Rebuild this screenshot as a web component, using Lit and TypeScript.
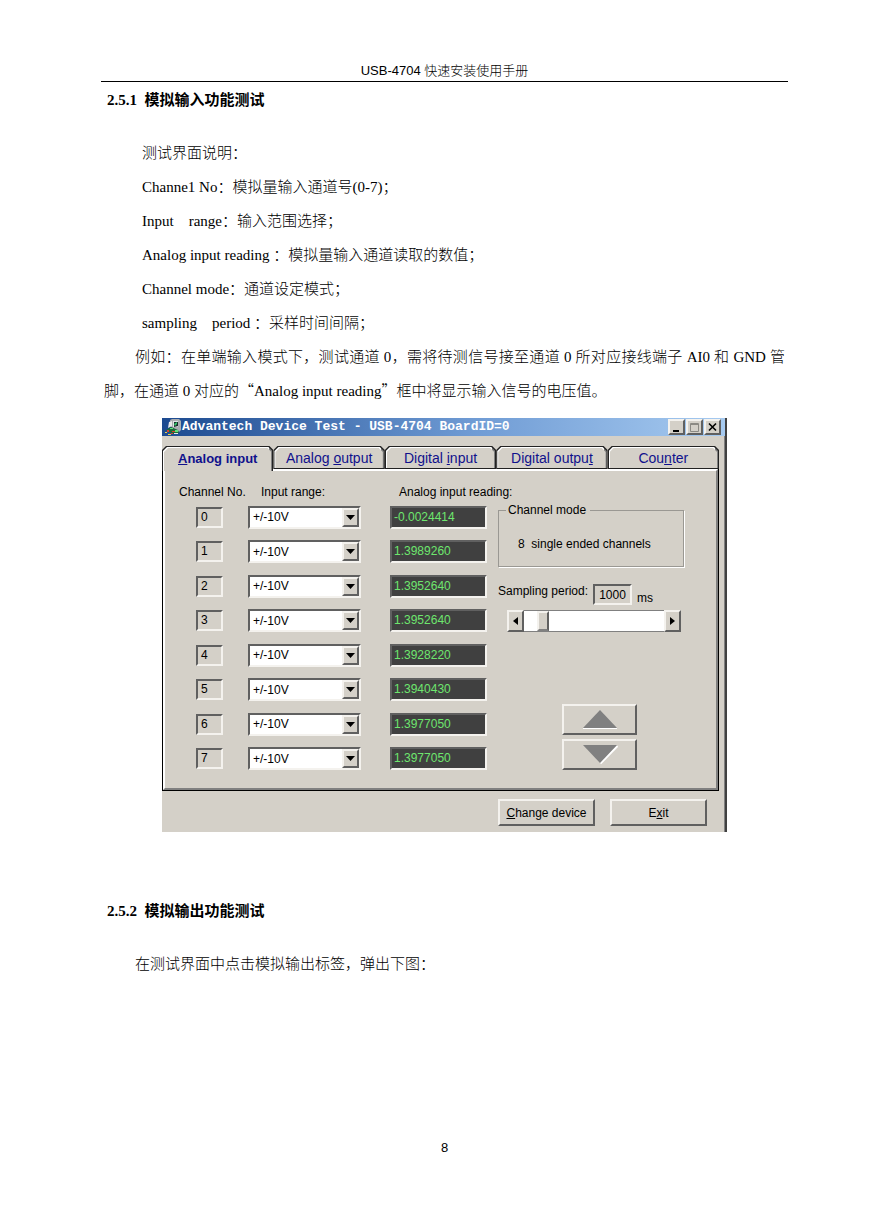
import { LitElement, html, css, svg } from "lit";
import { customElement, state } from "lit/decorators.js";
import { classMap } from "lit/directives/class-map.js";

interface Tab {
  before: string;
  key: string;
  after: string;
}

@customElement("device-test-window")
class DeviceTestWindow extends LitElement {
  static styles = css`
    :host {
      display: block;
      box-sizing: border-box;
      background: #d4d0c8;
      border-right: 2px solid #404040;
      box-shadow: inset -1px 0 #808080;
      color: #000;
      font: 12px/14px "Liberation Sans", sans-serif;
    }
    * {
      box-sizing: border-box;
    }
    button,
    input,
    select {
      margin: 0;
      padding: 0;
      border-radius: 0;
      font: inherit;
      color: inherit;
    }
    .raised {
      background: #d4d0c8;
      border: 2px solid;
      border-color: #f4f2ee #606060 #606060 #f4f2ee;
    }
    .sunken {
      border: 2px solid;
      border-color: #606060 #f4f2ee #f4f2ee #606060;
    }
    .titlebar {
      display: flex;
      align-items: center;
      height: 18px;
      padding: 0 4px 0 2px;
      background: linear-gradient(90deg, #1c4a90 0%, #6f9bd4 55%, #a6caf0 100%);
    }
    .app-icon {
      width: 18px;
      height: 18px;
      flex: none;
    }
    .title {
      flex: 1;
      margin: 0;
      font: bold 13px/18px "Liberation Mono", monospace;
      color: #fff;
      white-space: nowrap;
    }
    .winbtn {
      display: grid;
      place-items: center;
      width: 17px;
      height: 16px;
    }
    .winbtn + .winbtn {
      margin-left: 1px;
    }
    .winbtn svg {
      display: block;
    }
    .tabs {
      display: flex;
      margin: 10px 6px 0 0;
    }
    .tab {
      position: relative;
      flex: 1;
      height: 23px;
      border: 0;
      background: #222;
      color: #10108c;
      font-size: 14px;
      line-height: 22px;
      clip-path: polygon(0 4px, 4px 0, calc(100% - 4px) 0, 100% 4px, 100% 100%, 0 100%);
    }
    .tab::before,
    .tab::after {
      content: "";
      position: absolute;
      clip-path: polygon(0 4px, 4px 0, calc(100% - 4px) 0, 100% 4px, 100% 100%, 0 100%);
    }
    .tab::before {
      inset: 1px;
      background: linear-gradient(90deg, #fff 97%, #808080 97%);
    }
    .tab::after {
      inset: 2px 2px 1px 2px;
      background: #d4d0c8;
    }
    .tab span {
      position: relative;
      z-index: 1;
    }
    .tab.active {
      z-index: 1;
      height: 25px;
      margin-bottom: -2px;
      font-size: 13px;
      font-weight: bold;
      line-height: 25px;
    }
    .tab.active::before,
    .tab.active::after {
      bottom: 0;
    }
    .frame {
      margin-right: 6px;
      border: solid #000;
      border-width: 0 1px 1px 1px;
    }
    .panel {
      display: flex;
      gap: 11px;
      padding: 12px 32px 12px 14px;
      border: 2px solid;
      border-color: #fff #808080 #808080 #fff;
    }
    table {
      flex: none;
      width: 308px;
      height: 293px;
      border-collapse: collapse;
      table-layout: fixed;
    }
    th,
    td {
      padding: 0;
      font-weight: normal;
      text-align: left;
      white-space: nowrap;
    }
    thead th {
      height: 17px;
    }
    .c-no {
      width: 69px;
    }
    .c-range {
      width: 142px;
    }
    .h-range {
      padding-left: 13px;
    }
    .h-read {
      padding-left: 9px;
    }
    .no {
      display: block;
      width: 27px;
      height: 21px;
      margin-left: 17px;
      padding-left: 3px;
      line-height: 17px;
    }
    .pick {
      display: block;
      position: relative;
      width: 113px;
      height: 23px;
      background: #fff;
    }
    select {
      display: block;
      width: 100%;
      height: 19px;
      padding-left: 3px;
      border: 0;
      background: none;
      appearance: none;
      outline: none;
    }
    .drop {
      position: absolute;
      top: 0;
      right: 0;
      display: grid;
      place-items: center;
      width: 17px;
      height: 19px;
      pointer-events: none;
    }
    .reading {
      display: block;
      width: 97px;
      height: 23px;
      padding-left: 2px;
      background: #404040;
      color: #6ee66e;
      line-height: 19px;
    }
    .side {
      flex: 1;
      min-width: 0;
      padding-top: 20px;
    }
    fieldset {
      height: 64px;
      margin: 0;
      padding: 20px 0 0 19px;
      border: 1px solid #9a9893;
      box-shadow: 1px 1px #fff;
    }
    legend {
      margin-left: -12px;
      padding: 0 4px 0 2px;
      background: #d4d0c8;
    }
    .mode {
      margin: 0;
      white-space: pre;
    }
    .period {
      display: flex;
      align-items: flex-start;
      gap: 5px;
      margin-top: 17px;
    }
    .period label {
      width: 90px;
      white-space: nowrap;
    }
    .period input {
      width: 39px;
      height: 21px;
      background: none;
      text-align: center;
    }
    .unit {
      align-self: flex-end;
    }
    .scroll {
      display: flex;
      width: 174px;
      height: 22px;
      margin: 5px 0 0 9px;
    }
    .step {
      display: grid;
      place-items: center;
      flex: none;
      width: 17px;
      height: 22px;
    }
    .scroll input {
      flex: 1;
      min-width: 0;
      height: 22px;
      background: #fff;
      border: solid #808080;
      border-width: 1px 0;
      appearance: none;
      outline: none;
    }
    .scroll input::-webkit-slider-thumb {
      appearance: none;
      box-sizing: border-box;
      width: 12px;
      height: 20px;
      background: #d4d0c8;
      border: 2px solid;
      border-color: #f4f2ee #606060 #808080 #f4f2ee;
    }
    .arrows {
      display: grid;
      gap: 4px;
      width: 75px;
      margin: 72px 0 0 64px;
    }
    .arrow {
      display: grid;
      place-items: center;
      height: 31px;
    }
    .footer {
      display: flex;
      justify-content: flex-end;
      gap: 15px;
      padding: 8px 18px 6px 0;
    }
    .footer button {
      width: 97px;
      height: 27px;
    }
  `;

  @state() private active = 0;

  private tabs: Tab[] = [
    { before: "", key: "A", after: "nalog input" },
    { before: "Analog ", key: "o", after: "utput" },
    { before: "Digital ", key: "i", after: "nput" },
    { before: "Digital outpu", key: "t", after: "" },
    { before: "Cou", key: "n", after: "ter" },
  ];

  private readings = [
    "-0.0024414",
    "1.3989260",
    "1.3952640",
    "1.3952640",
    "1.3928220",
    "1.3940430",
    "1.3977050",
    "1.3977050",
  ];

  private triangle(w: number, h: number, points: string) {
    return html`<svg width=${w} height=${h} aria-hidden="true">${svg`<polygon points=${points} />`}</svg>`;
  }

  render() {
    return html`
      <header class="titlebar">
        <svg class="app-icon" viewBox="0 0 18 18" aria-hidden="true">
          <path d="M6 2L8 1H15L17 3V12L15 14L7 9Z" fill="#a9acb0" />
          <path d="M9 3H14V9H9Z" fill="#dfe3e3" />
          <path d="M10 4H14V8L10 9Z" fill="#1d2b2b" />
          <path d="M10 6L13 4V6L11 8Z" fill="#35c46a" />
          <path d="M5 4L8 3V8L4 10Z" fill="#e8e8e8" />
          <path d="M2 12L7 9L14 12L15 15L9 16Z" fill="#1c6b3a" />
          <path d="M6 10h3v1H6zM11 12h3v2h-3z" fill="#5ee07a" />
          <path d="M1 14h2v1H1zM4 16h3v1H4z" fill="#e8d24a" />
          <path d="M3 12h2v2H3zM8 13h3v1H8zM7 15h2v1H7z" fill="#d8402c" />
          <path d="M10 15h4v1h-4z" fill="#e4e8e4" />
        </svg>
        <h3 class="title">Advantech Device Test - USB-4704 BoardID=0</h3>
        <button class="winbtn raised" aria-label="Minimize">
          <svg width="11" height="10"><path d="M2 8h6v2H2z" /></svg>
        </button>
        <button class="winbtn raised" aria-label="Maximize" disabled>
          <svg width="11" height="10"><path d="M1.500 1.500h8v8h-8zM1 2.500h9" fill="none" stroke="#8c8a84" /></svg>
        </button>
        <button class="winbtn raised" aria-label="Close">
          <svg width="11" height="10"><path d="M2 1.500L9 8.500M9 1.500L2 8.500" stroke="#000" stroke-width="1.600" /></svg>
        </button>
      </header>

      <div class="tabs" role="tablist">
        ${this.tabs.map(
          (t, i) => html`<button
            role="tab"
            aria-selected=${i === this.active}
            class=${classMap({ tab: true, active: i === this.active })}
            @click=${() => (this.active = i)}
          ><span>${t.before}<u>${t.key}</u>${t.after}</span></button>`
        )}
      </div>

      <div class="frame">
        <div class="panel" role="tabpanel">
          <table>
            <thead>
              <tr>
                <th class="c-no" scope="col">Channel No.</th>
                <th class="c-range h-range" scope="col">Input range:</th>
                <th class="h-read" scope="col">Analog input reading:</th>
              </tr>
            </thead>
            <tbody>
              ${this.readings.map(
                (r, i) => html`<tr>
                  <th scope="row"><span class="no sunken">${i}</span></th>
                  <td>
                    <span class="pick sunken">
                      <select aria-label="Input range, channel ${i}">
                        <option>+/-10V</option>
                      </select>
                      <span class="drop raised">${this.triangle(9, 5, "0,0 9,0 4.500,5")}</span>
                    </span>
                  </td>
                  <td><output class="reading sunken">${r}</output></td>
                </tr>`
              )}
            </tbody>
          </table>

          <div class="side">
            <fieldset>
              <legend>Channel mode</legend>
              <p class="mode">8  single ended channels</p>
            </fieldset>
            <div class="period">
              <label for="period">Sampling period:</label>
              <input id="period" class="sunken" type="text" value="1000" />
              <span class="unit">ms</span>
            </div>
            <div class="scroll">
              <button class="step raised" aria-label="Shorter period">
                ${this.triangle(5, 8, "5,0 5,8 0,4")}
              </button>
              <input type="range" min="0" max="10000" value="1000" aria-label="Sampling period" />
              <button class="step raised" aria-label="Longer period">
                ${this.triangle(5, 8, "0,0 0,8 5,4")}
              </button>
            </div>
            <div class="arrows">
              <button class="arrow raised" aria-label="Previous channels">
                <svg width="36" height="19">
                  <path d="M1 18.500H35" stroke="#fff" />
                  <polygon points="18,0 35,18 1,18" fill="#808080" />
                </svg>
              </button>
              <button class="arrow raised" aria-label="Next channels">
                <svg width="36" height="19">
                  <path d="M35.500 1L18.500 18.500" stroke="#fff" stroke-width="2" />
                  <polygon points="1,0 35,0 18,18" fill="#808080" />
                </svg>
              </button>
            </div>
          </div>
        </div>
      </div>

      <div class="footer">
        <button class="raised"><u>C</u>hange device</button>
        <button class="raised">E<u>x</u>it</button>
      </div>
    `;
  }
}

@customElement("app-root")
class AppRoot extends LitElement {
  static styles = css`
    :host {
      display: block;
      background: #fff;
      color: #000;
      padding: 61px 81px 70px 101px;
      font: 15px/34px "Liberation Serif", "Noto Sans CJK SC", serif;
    }
    .running {
      padding-bottom: 1px;
      border-bottom: 1px solid #000;
      font: 13px/19px "Liberation Sans", "Noto Sans CJK SC", sans-serif;
      text-align: center;
    }
    .zh {
      font-weight: 300;
    }
    h2 {
      margin: 0 0 19px;
      padding: 1px 6px 0;
      font-size: 15px;
      font-weight: bold;
      line-height: 34px;
      white-space: pre-wrap;
    }
    .body {
      margin: 0 3px;
      font-weight: 300;
    }
    .terms {
      margin: 0;
      padding: 0 0 0 38px;
      list-style: none;
    }
    p {
      margin: 0;
      text-indent: 31px;
      text-align: justify;
    }
    .quote {
      font-family: "Noto Sans CJK SC", sans-serif;
      line-height: 1;
    }
    device-test-window {
      width: 565px;
      max-width: 100%;
      margin: 10px auto 61px;
    }
    .folio {
      margin-top: 157px;
      font: 13px/20px "Liberation Sans", sans-serif;
      text-align: center;
    }
  `;

  private terms = [
    "测试界面说明：",
    "Channe1 No：模拟量输入通道号(0-7)；",
    "Input　range：输入范围选择；",
    "Analog input reading ：模拟量输入通道读取的数值；",
    "Channel mode：通道设定模式；",
    "sampling　period ：采样时间间隔；",
  ];

  render() {
    return html`
      <header class="running">USB-4704 <span class="zh">快速安装使用手册</span></header>
      <main lang="zh-CN">
        <h2>2.5.1  模拟输入功能测试</h2>
        <div class="body">
          <ul class="terms">
            ${this.terms.map((t) => html`<li>${t}</li>`)}
          </ul>
          <p>例如：在单端输入模式下，测试通道 0，需将待测信号接至通道 0 所对应接线端子 AI0 和 GND 管脚，在通道 0 对应的<span class="quote">“</span>Analog input reading<span class="quote">”</span>框中将显示输入信号的电压值。</p>
        </div>
        <device-test-window></device-test-window>
        <h2>2.5.2  模拟输出功能测试</h2>
        <div class="body">
          <p>在测试界面中点击模拟输出标签，弹出下图：</p>
        </div>
      </main>
      <footer class="folio">8</footer>
    `;
  }
}
